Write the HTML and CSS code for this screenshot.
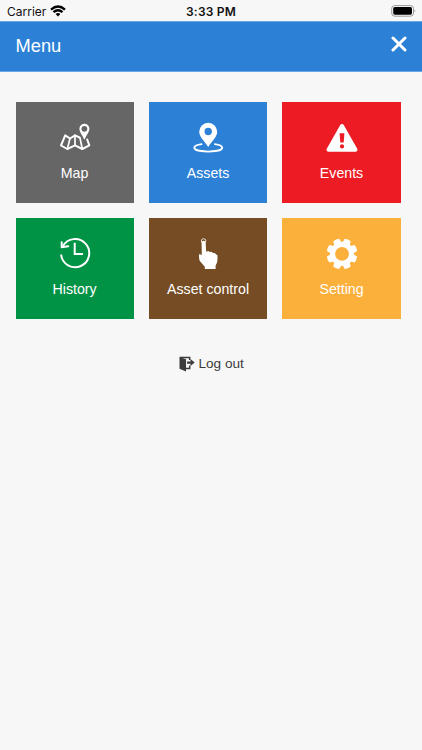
FILE: index.html
```html
<!DOCTYPE html>
<html lang="en">
<head>
<meta charset="utf-8">
<title>Menu</title>
<link rel="stylesheet" href="styles.css">
</head>
<body>
<div class="status">
  <div class="carrier"><span>Carrier</span>
    <svg width="16" height="12" viewBox="0 0 16 12" fill="none" stroke="#000" stroke-width="2.3"><path d="M1 4.6Q8-1.6 15 4.6M3.5 7.2Q8 3.3 12.5 7.2"/><path d="M5.6 9Q8 7 10.4 9L8 11.4Z" fill="#000" stroke="none"/></svg>
  </div>
  <div class="clock">3:33 PM</div>
  <svg class="battery" width="26" height="12" viewBox="0 0 26 12"><rect x=".7" y=".6" width="21.8" height="10.6" rx="3" fill="none" stroke="#999"/><rect x="2.2" y="2.1" width="18.8" height="7.6" rx="1.6"/><path d="M23.7 4.2q1.6 1.7 0 3.4z" fill="#999"/></svg>
</div>
<header class="bar">
  <h1>Menu</h1>
  <svg class="close" width="16" height="16" viewBox="0 0 16 16" stroke="#fff" stroke-width="3" stroke-linecap="round"><path d="M2 2L14 14M14 2L2 14"/></svg>
</header>
<main>
  <nav class="grid">
    <a class="tile map">
      <svg width="40" height="40" viewBox="0 0 40 40" fill="none" stroke="#fff" stroke-width="2" stroke-linejoin="round" stroke-linecap="round"><path d="M24.5 19.5L20 17.3L15 20.5L10.2 17.3L6 27.5L12.3 31L20 27.4L27.3 31L34.3 27.3L32.2 21.5"/><path stroke-width="1.7" d="M15 20.5L12.3 31M20 17.3V27.4M25 20L27.3 31"/><path fill="#fff" fill-rule="evenodd" stroke="none" d="M29.4 5.8a5 5 0 0 1 5 5c0 3-2.7 6-4.6 10.4h-.8c-1.9-4.4-4.6-7.4-4.6-10.4a5 5 0 0 1 5-5zm0 2.1a2.9 2.9 0 1 0 0 5.8a2.9 2.9 0 0 0 0-5.8z"/></svg>
      <span>Map</span></a>
    <a class="tile assets">
      <svg width="40" height="40" viewBox="0 0 40 40" fill="#fff"><path fill-rule="evenodd" d="M20.2 4.8a9 9 0 0 1 9 9c0 5-4.6 8.6-9 15.2c-4.4-6.6-9-10.2-9-15.2a9 9 0 0 1 9-9zm0 5a3.7 3.7 0 1 0 0 7.4a3.7 3.7 0 0 0 0-7.4z"/><path fill="none" stroke="#fff" stroke-width="1.9" stroke-linecap="round" d="M13.5 26.1C4.5 27.4 4 31.4 11.5 32.8Q20.2 34.4 29 32.8C36.5 31.4 36 27.4 27 26.1"/></svg>
      <span>Assets</span></a>
    <a class="tile events">
      <svg width="40" height="40" viewBox="0 0 40 40"><path fill="#fff" stroke="#fff" stroke-width="4" stroke-linejoin="round" d="M20 8L33.5 31.8H6.5Z"/><path fill="#ed1c24" d="M17.6 15.2h4.8l-.7 9.3h-3.4z"/><circle cx="20" cy="28.4" r="2.1" fill="#ed1c24"/></svg>
      <span>Events</span></a>
    <a class="tile history">
      <svg width="40" height="40" viewBox="0 0 40 40" fill="none" stroke="#fff" stroke-width="2"><path d="M6.1 20.5A14.1 14.1 0 1 0 7.8 12.3"/><path stroke-linecap="round" stroke-linejoin="round" d="M6.7 8.2V13.3L13.3 12.2"/><path d="M19.7 8.8V20H28"/></svg>
      <span>History</span></a>
    <a class="tile control">
      <svg width="40" height="40" viewBox="0 0 40 40" fill="#fff"><circle cx="15.6" cy="7" r="2.3" fill="none" stroke="#fff" stroke-width=".8"/><path d="M13.6 8q2-2.4 4 0l.6 9.8l2-.8l1.7 1l1.7-.3l1.5 1.2l1.8.1l1.2 1.5l1.3.5q.4 4.5-.3 7.5L27.6 31.5V35H16.8v-2.3L11.8 27q-1.3-3.6-.5-7l2.5 1z"/></svg>
      <span>Asset control</span></a>
    <a class="tile setting">
      <svg width="40" height="40" viewBox="0 0 40 40"><g fill="#fff" transform="translate(20 19.8) rotate(22.5)"><g id="teeth"><path id="tooth" d="M-4-10L-3.2-15Q0-16 3.2-15L4-10V10L3.2 15Q0 16-3.2 15L-4 10Z"/><use href="#tooth" transform="rotate(90)"/></g><use href="#teeth" transform="rotate(45)"/><circle r="11.9"/></g><circle cx="20" cy="19.8" r="6.9" fill="#fbb03b"/></svg>
      <span>Setting</span></a>
  </nav>
  <a class="logout">
    <svg width="16" height="16" viewBox="0 0 16 16"><path fill="#3c3c3c" d="M.5 1L7 3.3V15.4L.5 12.8Z"/><path fill="none" stroke="#3c3c3c" stroke-width="1.5" d="M.8 1.5H10.7V4M7 12.5H10.7V9.5"/><path fill="#3c3c3c" d="M8 5.6h3.5V3.1L15.7 6.6L11.5 10.1V7.7H8z"/></svg>
    <span>Log out</span></a>
</main>
</body>
</html>
```
FILE: styles.css
```css
* { box-sizing: border-box; }
body { margin: 0; min-height: 750px; background: #f7f7f7; font-family: "Liberation Sans", Arial, sans-serif; }
svg { display: block; flex: none; }
.status { display: grid; grid-template-columns: 1fr auto 1fr; align-items: center; height: 21px; padding: 1px 5px 0 7px; font-family: Inter, sans-serif; font-size: 12px; color: #111; }
.carrier { display: flex; align-items: center; gap: 4px; font-size: 12px; }
.clock { margin-right: 2px; font-weight: 600; letter-spacing: .2px; }
.battery { justify-self: end; }
.bar { display: flex; justify-content: space-between; height: 51px; padding: 0 15.5px; background: #2c81d6; border-top: 1px solid #69a8e4; border-bottom: 1px solid #69a8e4; color: #fff; }
h1 { margin: 0; font-size: 18.3px; font-weight: 400; line-height: 47px; }
.close { margin-top: 14px; }
main { padding: 30px 21.4px 0 15.5px; }
.grid { display: grid; grid-template-columns: repeat(3, 1fr); grid-auto-rows: 101px; gap: 15px 15.3px; }
.tile { display: flex; flex-direction: column; align-items: center; padding-top: 16px; color: #fff; font-size: 14.2px; line-height: 18px; white-space: nowrap; }
.tile span { margin-top: 6px; }
.map { background: #666; }
.assets { background: #2c81d6; }
.events { background: #ed1c24; }
.history { background: #009245; }
.control { background: #754c24; }
.setting { background: #fbb03b; }
.logout { display: flex; align-items: center; gap: 4px; margin: 35px 0 0 163px; color: #3c3c3c; font-size: 13.6px; line-height: 20px; }
```
